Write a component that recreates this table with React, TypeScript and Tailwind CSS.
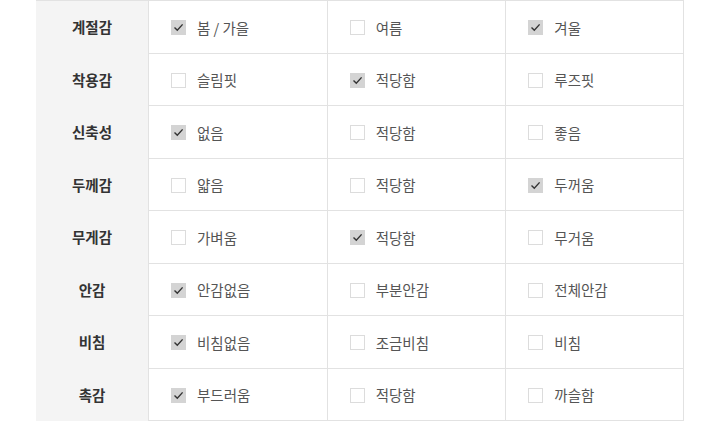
const rows: { label: string; options: [string, boolean][] }[] = [
  { label: '계절감', options: [['봄 / 가을', true], ['여름', false], ['겨울', true]] },
  { label: '착용감', options: [['슬림핏', false], ['적당함', true], ['루즈핏', false]] },
  { label: '신축성', options: [['없음', true], ['적당함', false], ['좋음', false]] },
  { label: '두께감', options: [['얇음', false], ['적당함', false], ['두꺼움', true]] },
  { label: '무게감', options: [['가벼움', false], ['적당함', true], ['무거움', false]] },
  { label: '안감', options: [['안감없음', true], ['부분안감', false], ['전체안감', false]] },
  { label: '비침', options: [['비침없음', true], ['조금비침', false], ['비침', false]] },
  { label: '촉감', options: [['부드러움', true], ['적당함', false], ['까슬함', false]] },
];

function Check({ on }: { on: boolean }) {
  if (!on) {
    return <span className="block w-[15px] h-[15px] border border-[#dcdcdc] bg-white" />;
  }
  return (
    <span className="flex items-center justify-center w-[15px] h-[15px] bg-[#d4d4d4]">
      <svg width="11" height="11" viewBox="0 0 11 11" fill="none">
        <path d="M1.5 5.5 L4.3 8.3 L9.6 2.4" stroke="#333" strokeWidth="1.4" />
      </svg>
    </span>
  );
}

export default function App() {
  return (
    <div
      className="w-[720px] h-[421px] bg-white overflow-hidden"
      style={{ fontFamily: '"Noto Sans CJK KR", "Noto Sans", sans-serif' }}
    >
      <div className="ml-[36px] w-[648px] border-t border-[#e2e2e2]">
        {rows.map((r) => (
          <div key={r.label} className="grid grid-cols-[112px_1fr_1fr_1fr] h-[52.5px]">
            <div className="bg-[#f4f4f4] flex items-center justify-center text-[14.5px] font-bold text-[#333]">
              {r.label}
            </div>
            {r.options.map(([text, on]) => (
              <div
                key={text}
                className="flex items-center gap-[11px] pl-[22px] pt-[2px] border-l border-b border-[#e2e2e2] last:border-r text-[14.5px] text-[#555]"
              >
                <Check on={on} />
                <span>{text}</span>
              </div>
            ))}
          </div>
        ))}
      </div>
    </div>
  );
}
